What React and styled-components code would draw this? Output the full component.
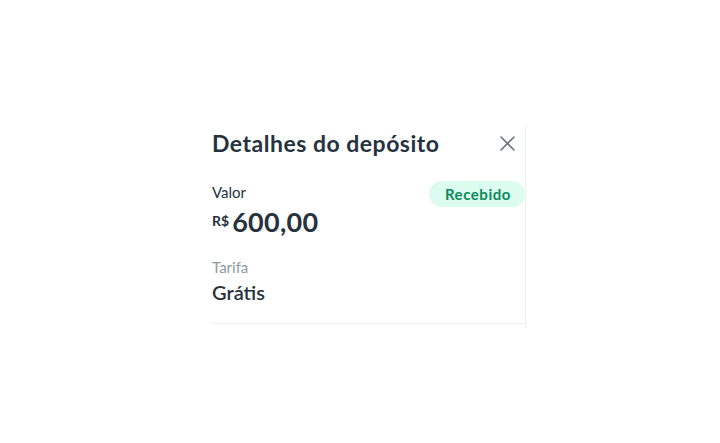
import React from "react";
import { styled, createGlobalStyle } from "styled-components";

const GlobalStyle = createGlobalStyle`
  html, body {
    margin: 0;
    padding: 0;
    background: #ffffff;
  }
  body {
    font-family: Lato, "Noto Sans", sans-serif;
    color: #26323d;
  }
`;

const Page = styled.div`
  box-sizing: border-box;
  width: 720px;
  height: 443px;
  padding: 125px 0 0 212px;
`;

const Panel = styled.section`
  box-sizing: border-box;
  width: 314px;
  height: 203px;
  border-right: 1px solid #eceef0;
  display: flex;
  flex-direction: column;
`;

const Header = styled.div`
  display: flex;
  align-items: center;
  justify-content: space-between;
  height: 36px;
  padding-right: 10px;
`;

const Title = styled.h2`
  margin: 0;
  font-size: 23px;
  font-weight: 700;
  color: #26323d;
  letter-spacing: 0.5px;
`;

const CloseButton = styled.button`
  border: none;
  background: none;
  padding: 0;
  width: 16px;
  height: 16px;
  display: flex;
  align-items: center;
  justify-content: center;
  color: #6b7680;
  cursor: pointer;
`;

const Row = styled.div`
  display: flex;
  justify-content: space-between;
  align-items: flex-start;
  margin-top: ${(p) => p.$top || 0}px;
`;

const Field = styled.div`
  display: flex;
  flex-direction: column;
`;

const Label = styled.span`
  font-size: 15px;
  line-height: 18px;
  color: ${(p) => (p.$muted ? "#8d99a3" : "#26323d")};
`;

const Amount = styled.div`
  display: flex;
  align-items: baseline;
  gap: 3px;
  margin-top: 6px;
  color: #26323d;
  font-weight: 700;
`;

const Currency = styled.span`
  font-size: 14px;
  position: relative;
  top: -6px;
`;

const Number = styled.span`
  font-size: 27px;
  line-height: 30px;
  letter-spacing: 0.3px;
`;

const Value = styled.span`
  font-size: 20px;
  line-height: 24px;
  font-weight: 600;
  margin-top: 4px;
`;

const Badge = styled.span`
  margin-top: -2px;
  display: inline-flex;
  align-items: center;
  height: 26px;
  padding: 0 14px 0 16px;
  border-radius: 13px;
  background: #dcfcef;
  color: #0c8a5b;
  font-size: 15px;
  font-weight: 700;
  letter-spacing: 0.55px;
`;

const Divider = styled.hr`
  margin: 19px 0 0;
  border: none;
  border-top: 1px solid #eef1f4;
`;

export default function App() {
  return (
    <>
      <GlobalStyle />
      <Page>
        <Panel>
          <Header>
            <Title>Detalhes do depósito</Title>
            <CloseButton aria-label="Fechar">
              <svg width="15" height="15" viewBox="0 0 15 15" fill="none">
                <path
                  d="M1 1L14 14M14 1L1 14"
                  stroke="currentColor"
                  strokeWidth="1.6"
                  strokeLinecap="round"
                />
              </svg>
            </CloseButton>
          </Header>
          <Row $top={22}>
            <Field>
              <Label>Valor</Label>
              <Amount>
                <Currency>R$</Currency>
                <Number>600,00</Number>
              </Amount>
            </Field>
            <Badge>Recebido</Badge>
          </Row>
          <Row $top={21}>
            <Field>
              <Label $muted>Tarifa</Label>
              <Value>Grátis</Value>
            </Field>
          </Row>
          <Divider />
        </Panel>
      </Page>
    </>
  );
}
